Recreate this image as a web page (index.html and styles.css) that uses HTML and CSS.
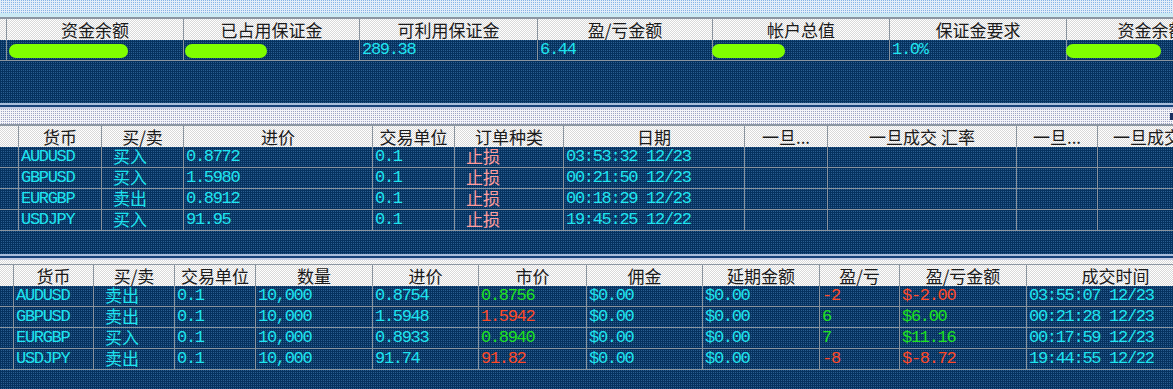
FILE: index.html
```html
<!DOCTYPE html>
<html lang="zh-CN">

<head>
    <meta charset="UTF-8">
    <meta name="viewport" content="width=device-width, initial-scale=1.0">
    <title>交易账户</title>
    <link rel="stylesheet" href="styles.css">
</head>

<body>
    <div class="screen">
        <!-- 账户摘要 -->
        <section class="pane pane-account">
            <div class="band band-blue"><div class="band-dots"></div><div class="band-light"></div></div>
            <div class="row head acct">
                <div class="stub"></div>
                <div class="cell">资金余额</div>
                <div class="cell">已占用保证金</div>
                <div class="cell">可利用保证金</div>
                <div class="cell">盈/亏金额</div>
                <div class="cell">帐户总值</div>
                <div class="cell">保证金要求</div>
                <div class="cell">资金余额</div>
            </div>
            <div class="row data acct">
                <div class="stub"></div>
                <div class="cell"><span class="mask mask-1"></span></div>
                <div class="cell"><span class="mask mask-2"></span></div>
                <div class="cell">289.38</div>
                <div class="cell">6.44</div>
                <div class="cell"><span class="mask mask-3"></span></div>
                <div class="cell">1.0%</div>
                <div class="cell"><span class="mask mask-4"></span></div>
            </div>
        </section>

        <div class="splitter"></div>

        <!-- 挂单 -->
        <section class="pane pane-orders">
            <div class="band band-gray"><span class="grip"></span></div>
            <div class="row head orders">
                <div class="stub"></div>
                <div class="cell">货币</div>
                <div class="cell">买/卖</div>
                <div class="cell">进价</div>
                <div class="cell">交易单位</div>
                <div class="cell">订单种类</div>
                <div class="cell">日期</div>
                <div class="cell">一旦...</div>
                <div class="cell">一旦成交 汇率</div>
                <div class="cell">一旦...</div>
                <div class="cell">一旦成交 汇率</div>
            </div>
            <div class="row data orders">
                <div class="stub"></div>
                <div class="cell">AUDUSD</div>
                <div class="cell cjk">买入</div>
                <div class="cell">0.8772</div>
                <div class="cell">0.1</div>
                <div class="cell cjk pink">止损</div>
                <div class="cell">03:53:32 12/23</div>
                <div class="cell"></div>
                <div class="cell"></div>
                <div class="cell"></div>
                <div class="cell"></div>
            </div>
            <div class="row data orders">
                <div class="stub"></div>
                <div class="cell">GBPUSD</div>
                <div class="cell cjk">买入</div>
                <div class="cell">1.5980</div>
                <div class="cell">0.1</div>
                <div class="cell cjk pink">止损</div>
                <div class="cell">00:21:50 12/23</div>
                <div class="cell"></div>
                <div class="cell"></div>
                <div class="cell"></div>
                <div class="cell"></div>
            </div>
            <div class="row data orders">
                <div class="stub"></div>
                <div class="cell">EURGBP</div>
                <div class="cell cjk">卖出</div>
                <div class="cell">0.8912</div>
                <div class="cell">0.1</div>
                <div class="cell cjk pink">止损</div>
                <div class="cell">00:18:29 12/23</div>
                <div class="cell"></div>
                <div class="cell"></div>
                <div class="cell"></div>
                <div class="cell"></div>
            </div>
            <div class="row data orders">
                <div class="stub"></div>
                <div class="cell">USDJPY</div>
                <div class="cell cjk">买入</div>
                <div class="cell">91.95</div>
                <div class="cell">0.1</div>
                <div class="cell cjk pink">止损</div>
                <div class="cell">19:45:25 12/22</div>
                <div class="cell"></div>
                <div class="cell"></div>
                <div class="cell"></div>
                <div class="cell"></div>
            </div>
        </section>

        <div class="splitter"></div>

        <!-- 持仓 -->
        <section class="pane pane-trades">
            <div class="band band-thin"></div>
            <div class="row head trades">
                <div class="stub"></div>
                <div class="cell">货币</div>
                <div class="cell">买/卖</div>
                <div class="cell">交易单位</div>
                <div class="cell">数量</div>
                <div class="cell">进价</div>
                <div class="cell">市价</div>
                <div class="cell">佣金</div>
                <div class="cell">延期金额</div>
                <div class="cell">盈/亏</div>
                <div class="cell">盈/亏金额</div>
                <div class="cell">成交时间</div>
            </div>
            <div class="row data trades">
                <div class="stub"></div>
                <div class="cell">AUDUSD</div>
                <div class="cell cjk">卖出</div>
                <div class="cell">0.1</div>
                <div class="cell">10,000</div>
                <div class="cell">0.8754</div>
                <div class="cell up">0.8756</div>
                <div class="cell">$0.00</div>
                <div class="cell">$0.00</div>
                <div class="cell down">-2</div>
                <div class="cell down">$-2.00</div>
                <div class="cell">03:55:07 12/23</div>
            </div>
            <div class="row data trades">
                <div class="stub"></div>
                <div class="cell">GBPUSD</div>
                <div class="cell cjk">卖出</div>
                <div class="cell">0.1</div>
                <div class="cell">10,000</div>
                <div class="cell">1.5948</div>
                <div class="cell down">1.5942</div>
                <div class="cell">$0.00</div>
                <div class="cell">$0.00</div>
                <div class="cell up">6</div>
                <div class="cell up">$6.00</div>
                <div class="cell">00:21:28 12/23</div>
            </div>
            <div class="row data trades">
                <div class="stub"></div>
                <div class="cell">EURGBP</div>
                <div class="cell cjk">买入</div>
                <div class="cell">0.1</div>
                <div class="cell">10,000</div>
                <div class="cell">0.8933</div>
                <div class="cell up">0.8940</div>
                <div class="cell">$0.00</div>
                <div class="cell">$0.00</div>
                <div class="cell up">7</div>
                <div class="cell up">$11.16</div>
                <div class="cell">00:17:59 12/23</div>
            </div>
            <div class="row data trades">
                <div class="stub"></div>
                <div class="cell">USDJPY</div>
                <div class="cell cjk">卖出</div>
                <div class="cell">0.1</div>
                <div class="cell">10,000</div>
                <div class="cell">91.74</div>
                <div class="cell down">91.82</div>
                <div class="cell">$0.00</div>
                <div class="cell">$0.00</div>
                <div class="cell down">-8</div>
                <div class="cell down">$-8.72</div>
                <div class="cell">19:44:55 12/22</div>
            </div>
        </section>
    </div>
</body>

</html>
```

FILE: styles.css
```css
* {
    box-sizing: border-box;
}

body {
    margin: 0;
    padding: 0;
    background-color: #0c3c6c;
    font-family: "Liberation Mono", monospace;
    overflow: hidden;
}

.screen {
    width: 1173px;
    height: 389px;
    overflow: hidden;
    display: flex;
    flex-direction: column;
}

.pane {
    overflow: hidden;
    background: conic-gradient(#2a5d8f 0 25%, #06325f 0) 0 0 / 2px 2px;
}

.pane-account {
    height: 103px;
}

.pane-orders {
    height: 145px;
}

.pane-trades {
    height: 129px;
}

.splitter {
    height: 6px;
    border-top: 2px solid #a9bedc;
    border-bottom: 2px solid #c4cce4;
    background-color: #17427a;
}

/* top strips */
.band-blue {
    height: 19px;
    border-bottom: 2px solid #8c96a2;
}

.band-dots {
    height: 13px;
    background: conic-gradient(#86b4e6 0 25%, #e2edf9 0) 0 0 / 2px 2px;
}

.band-light {
    height: 4px;
    background-color: #cbeaf4;
}

.band-gray {
    height: 17px;
    border-bottom: 2px solid #8c96a2;
    background: conic-gradient(#9ca2c4 0 25%, #f4f4f8 0) 0 0 / 2px 2px;
    display: flex;
    justify-content: flex-end;
    align-items: center;
}

.grip {
    width: 3px;
    height: 7px;
    background-color: #1c3060;
}

.band-thin {
    height: 5px;
    border-bottom: 1px solid #8c96a2;
    background: repeating-conic-gradient(#ffffff 0 25%, #dadada 0 50%) 0 0 / 2px 2px;
}

/* grid rows */
.row {
    display: grid;
    height: 21px;
    width: 1173px;
}

.acct {
    grid-template-columns: 6px 177px 176px 178px 175px 177px 177px 170px;
}

.orders {
    grid-template-columns: 18px 83px 82px 189px 82px 109px 181px 83px 189px 81px 137px;
}

.trades {
    grid-template-columns: 13px 80px 81px 81px 117px 106px 108px 116px 117px 80px 127px 178px;
}

.cell {
    border-left: 1px solid #8a949e;
    white-space: nowrap;
}

.head {
    background: repeating-conic-gradient(#ffffff 0 25%, #d8d8d8 0 50%) 0 0 / 2px 2px;
}

.head .cell {
    font-family: "Noto Sans CJK SC", sans-serif;
    font-size: 17px;
    line-height: 1;
    padding-top: 2px;
    color: #1a1a1a;
    text-align: center;
}

.data {
    border-bottom: 1px solid #8a949e;
}

.data .cell {
    padding-left: 2px;
    font-size: 17px;
    letter-spacing: -1.3px;
    line-height: 20px;
    color: #1ee4f0;
}

.data .cjk {
    font-family: "Noto Sans CJK SC", sans-serif;
    font-size: 17px;
    letter-spacing: 0;
    line-height: 1;
    padding-top: 0;
    padding-left: 11px;
}

.data .pink {
    color: #ff9c9c;
}

.data .up {
    color: #1ee21e;
}

.data .down {
    color: #ff4a28;
}

/* green redaction marks */
.mask {
    display: inline-block;
    height: 14px;
    margin-top: 4px;
    border-radius: 7px;
    background-color: #80ff00;
    vertical-align: top;
}

.mask-1 {
    width: 119px;
    margin-left: 0;
}

.mask-2 {
    width: 82px;
    margin-left: -1px;
}

.mask-3 {
    width: 73px;
    margin-left: -3px;
}

.mask-4 {
    width: 95px;
    margin-left: -3px;
}
```
